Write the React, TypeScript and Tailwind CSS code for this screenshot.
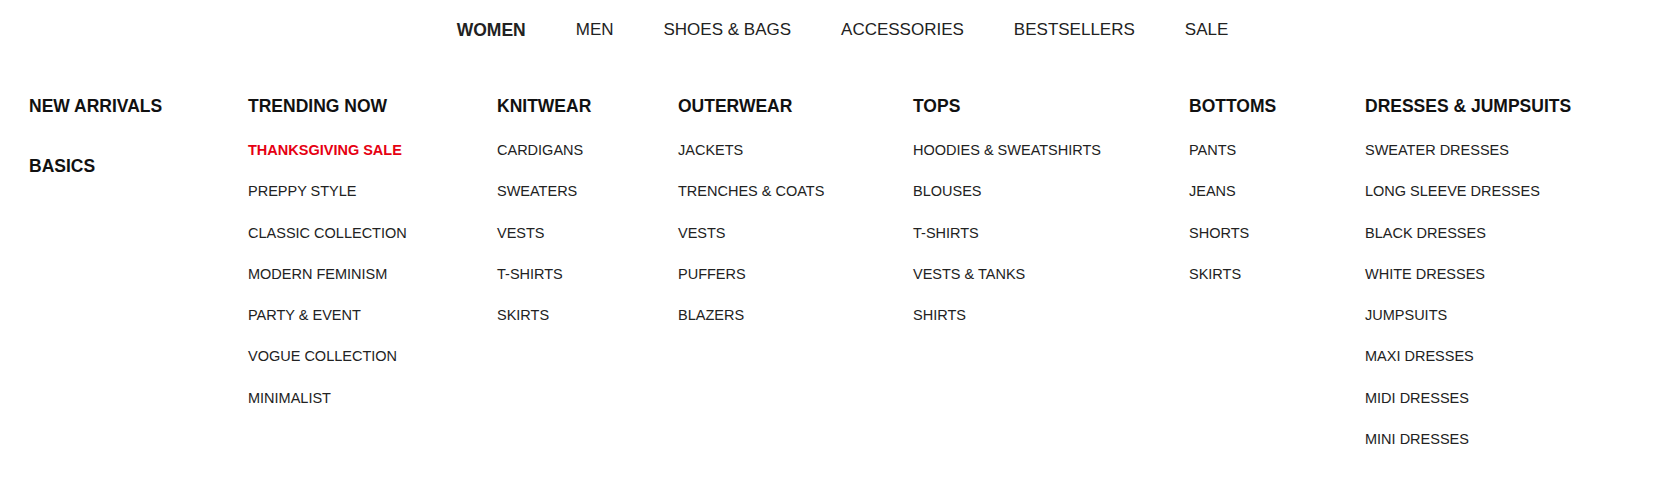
import React from "react";

const navLinks = ["WOMEN", "MEN", "SHOES & BAGS", "ACCESSORIES", "BESTSELLERS", "SALE"];

interface Column {
  title: string;
  width: string;
  items: { label: string; sale?: boolean }[];
}

const columns: Column[] = [
  {
    title: "TRENDING NOW",
    width: "w-[249px]",
    items: [
      { label: "THANKSGIVING SALE", sale: true },
      { label: "PREPPY STYLE" },
      { label: "CLASSIC COLLECTION" },
      { label: "MODERN FEMINISM" },
      { label: "PARTY & EVENT" },
      { label: "VOGUE COLLECTION" },
      { label: "MINIMALIST" },
    ],
  },
  {
    title: "KNITWEAR",
    width: "w-[181px]",
    items: [
      { label: "CARDIGANS" },
      { label: "SWEATERS" },
      { label: "VESTS" },
      { label: "T-SHIRTS" },
      { label: "SKIRTS" },
    ],
  },
  {
    title: "OUTERWEAR",
    width: "w-[235px]",
    items: [
      { label: "JACKETS" },
      { label: "TRENCHES & COATS" },
      { label: "VESTS" },
      { label: "PUFFERS" },
      { label: "BLAZERS" },
    ],
  },
  {
    title: "TOPS",
    width: "w-[276px]",
    items: [
      { label: "HOODIES & SWEATSHIRTS" },
      { label: "BLOUSES" },
      { label: "T-SHIRTS" },
      { label: "VESTS & TANKS" },
      { label: "SHIRTS" },
    ],
  },
  {
    title: "BOTTOMS",
    width: "w-[176px]",
    items: [{ label: "PANTS" }, { label: "JEANS" }, { label: "SHORTS" }, { label: "SKIRTS" }],
  },
  {
    title: "DRESSES & JUMPSUITS",
    width: "w-[260px]",
    items: [
      { label: "SWEATER DRESSES" },
      { label: "LONG SLEEVE DRESSES" },
      { label: "BLACK DRESSES" },
      { label: "WHITE DRESSES" },
      { label: "JUMPSUITS" },
      { label: "MAXI DRESSES" },
      { label: "MIDI DRESSES" },
      { label: "MINI DRESSES" },
    ],
  },
];

export default function App() {
  return (
    <div className="w-[1677px] h-[500px] bg-white font-['Liberation_Sans',Arial,sans-serif] overflow-hidden">
      {/* top nav */}
      <nav className="h-[60px] flex items-center justify-center gap-[50px] pl-[8px]">
        {navLinks.map((link, i) => (
          <a
            key={link}
            href="#"
            className={`leading-5 text-[#222] ${i === 0 ? "font-bold text-[17.5px]" : "text-[17px]"}`}
          >
            {link}
          </a>
        ))}
      </nav>

      {/* mega menu */}
      <div className="flex pl-[29px] pt-[36px]">
        <div className="w-[219px] flex flex-col gap-[40px]">
          <a href="#" className="text-[17.5px] leading-5 font-bold text-[#111]">
            NEW ARRIVALS
          </a>
          <a href="#" className="text-[17.5px] leading-5 font-bold text-[#111]">
            BASICS
          </a>
        </div>

        {columns.map((col) => (
          <div key={col.title} className={`${col.width} flex flex-col`}>
            <a href="#" className="text-[17.5px] leading-5 font-bold text-[#111] mb-[14px]">
              {col.title}
            </a>
            {col.items.map((item) => (
              <a
                key={item.label}
                href="#"
                className={`text-[14.5px] leading-[41.25px] ${
                  item.sale ? "font-bold text-[#e60012]" : "text-[#222]"
                }`}
              >
                {item.label}
              </a>
            ))}
          </div>
        ))}
      </div>
    </div>
  );
}
